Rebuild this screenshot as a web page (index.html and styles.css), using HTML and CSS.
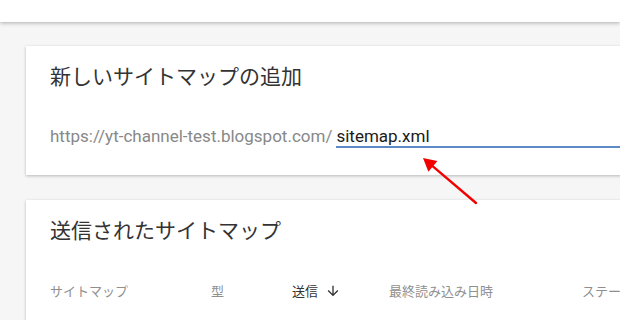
FILE: index.html
```html
<!DOCTYPE html>
<html lang="ja">
<head>
    <meta charset="UTF-8">
    <meta name="viewport" content="width=device-width, initial-scale=1.0">
    <title>サイトマップ</title>
    <link rel="stylesheet" href="styles.css">
</head>
<body>
    <header class="topbar"></header>

    <main class="content">
        <!-- 新しいサイトマップ -->
        <section class="card add-card">
            <h2 class="card-title">新しいサイトマップの追加</h2>
            <div class="url-row">
                <span class="url-prefix">https://yt-channel-test.blogspot.com/</span>
                <input class="url-input" type="text" value="sitemap.xml">
            </div>
        </section>

        <!-- 送信済み一覧 -->
        <section class="card list-card">
            <h2 class="card-title">送信されたサイトマップ</h2>
            <div class="table-head">
                <span class="col">サイトマップ</span>
                <span class="col">型</span>
                <span class="col sorted">送信
                    <svg class="sort-icon" viewBox="0 0 24 24" width="16" height="16"><path d="M20 12l-1.41-1.41L13 16.17V4h-2v12.17l-5.58-5.59L4 12l8 8 8-8z"/></svg>
                </span>
                <span class="col">最終読み込み日時</span>
                <span class="col">ステータス</span>
            </div>
        </section>
    </main>

    <svg class="pointer" viewBox="0 0 70 60" width="70" height="60">
        <line x1="17" y1="15.6" x2="61" y2="53" stroke="#f20000" stroke-width="2.4" stroke-linecap="round"/>
        <polygon points="8,8 13.4,21.7 22.4,11.1" fill="#f20000"/>
    </svg>
</body>
</html>
```

FILE: styles.css
```css
body {
    margin: 0;
    background-color: #f6f6f6;
    font-family: 'Roboto', 'Noto Sans CJK JP', sans-serif;
    overflow: hidden;
}
.topbar {
    height: 22px;
    background-color: #fff;
    box-shadow: 0 1px 4px rgba(0, 0, 0, 0.3);
    position: relative;
}
.content {
    padding: 24px 0 0 26px;
}
.card {
    width: 720px;
    background-color: #fff;
    box-shadow: 0 1px 3px rgba(0, 0, 0, 0.25);
    box-sizing: border-box;
    padding-left: 24px;
}
.card-title {
    margin: 0;
    font-family: 'Noto Sans CJK JP', sans-serif;
    font-size: 21px;
    font-weight: normal;
    line-height: 28px;
    color: #333;
}
.add-card {
    height: 129px;
    padding-top: 15px;
}
.url-row {
    display: flex;
    align-items: baseline;
    margin-top: 37px;
    font-size: 17px;
    line-height: 20px;
}
.url-prefix {
    color: #888;
    white-space: nowrap;
}
.url-input {
    flex: 1;
    margin-left: 4px;
    padding: 0;
    border: none;
    border-bottom: 2px solid #5b8ac4;
    font-family: 'Roboto', sans-serif;
    font-size: 17px;
    line-height: 20px;
    color: #1a1a1a;
    background: transparent;
    outline: none;
}
.list-card {
    margin-top: 25px;
    height: 200px;
    padding-top: 15px;
}
.table-head {
    display: grid;
    grid-template-columns: 161px 81px 97px 193px auto;
    margin-top: 38px;
    font-family: 'Noto Sans CJK JP', sans-serif;
    font-size: 13px;
    line-height: 20px;
    color: #8f8f8f;
}
.col {
    white-space: nowrap;
}
.sorted {
    display: flex;
    align-items: center;
    color: #333;
}
.sort-icon {
    margin-left: 7px;
    fill: #333;
}
.pointer {
    position: absolute;
    left: 415px;
    top: 150px;
}
```
